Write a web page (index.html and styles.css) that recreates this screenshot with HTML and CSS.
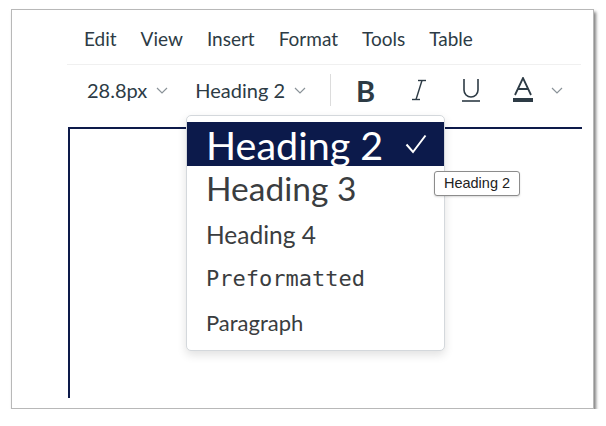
FILE: index.html
```html
<!DOCTYPE html>
<html lang="en">
<head>
  <meta charset="UTF-8">
  <title>Editor</title>
  <link rel="stylesheet" href="styles.css">
</head>
<body>
  <div class="frame">
    <nav class="menubar">
      <span>Edit</span>
      <span>View</span>
      <span>Insert</span>
      <span>Format</span>
      <span>Tools</span>
      <span>Table</span>
    </nav>
    <div class="rule"></div>

    <div class="toolbar">
      <div class="select size">
        <span>28.8px</span>
        <svg class="chev" width="12" height="7" viewBox="0 0 12 7"><polyline points="1,1 6,6 11,1" /></svg>
      </div>
      <div class="select block">
        <span>Heading 2</span>
        <svg class="chev" width="12" height="7" viewBox="0 0 12 7"><polyline points="1,1 6,6 11,1" /></svg>
      </div>
      <div class="divider"></div>
      <span class="btn bold">B</span>
      <svg class="btn ital" width="16" height="22" viewBox="0 0 16 22">
        <line x1="7" y1="1.5" x2="15" y2="1.5" />
        <line x1="11" y1="1.5" x2="5" y2="20.5" />
        <line x1="1" y1="20.5" x2="9" y2="20.5" />
      </svg>
      <svg class="btn under" width="20" height="24" viewBox="0 0 20 24">
        <path d="M3 1 V12 A7 7 0 0 0 17 12 V1" />
        <line x1="1" y1="23" x2="19" y2="23" />
      </svg>
      <svg class="btn color" width="22" height="26" viewBox="0 0 22 26">
        <path d="M3 18 L11 1 L19 18 M6 12 H16" />
        <rect class="bar" x="1" y="21" width="20" height="4" />
      </svg>
      <svg class="chev last" width="12" height="7" viewBox="0 0 12 7"><polyline points="1,1 6,6 11,1" /></svg>
    </div>

    <div class="editor"></div>

    <ul class="dropdown">
      <li class="item h2 active">
        <span>Heading 2</span>
        <svg class="check" width="22" height="20" viewBox="0 0 22 20"><polyline points="1.5,10.5 8,18 20.5,1.5" /></svg>
      </li>
      <li class="item h3">Heading 3</li>
      <li class="item h4">Heading 4</li>
      <li class="item pre">Preformatted</li>
      <li class="item para">Paragraph</li>
    </ul>

    <div class="tooltip">Heading 2</div>
  </div>
</body>
</html>
```

FILE: styles.css
```css
body {
  margin: 0;
  background: #fff;
  font-family: Lato, "Noto Sans", sans-serif;
  color: #2d3b45;
}
.frame {
  position: relative;
  box-sizing: border-box;
  margin: 9px 0 0 11px;
  width: 583px;
  height: 400px;
  background: #fff;
  border: 1px solid #b8b8b8;
  box-shadow: 2px 3px 3px rgba(0, 0, 0, 0.5);
}
.menubar {
  display: flex;
  gap: 24px;
  padding: 17px 0 0 72px;
  font-size: 19px;
  line-height: 24px;
}
.rule {
  margin: 13px 0 0 55px;
  width: 514px;
  border-top: 1px solid #f0f0f0;
}
.toolbar {
  display: flex;
  align-items: center;
  height: 42px;
  margin-top: 4px;
  padding-left: 75px;
  font-size: 20px;
}
.select {
  display: flex;
  align-items: center;
  gap: 9px;
}
.select.block {
  margin-left: 27px;
}
.chev {
  fill: none;
  stroke: #8a9298;
  stroke-width: 1.2;
}
.divider {
  width: 1px;
  height: 32px;
  background: #dcdcdc;
  margin-left: 24px;
}
.btn {
  color: #2d3b45;
  fill: none;
  stroke: #2d3b45;
}
.bold {
  margin-left: 25px;
  font-family: Lato, sans-serif;
  font-weight: bold;
  font-size: 29px;
  line-height: 1;
}
.ital {
  margin-left: 36px;
  stroke-width: 1.4;
}
.under {
  margin-left: 34px;
  stroke-width: 1.6;
}
.color {
  margin-left: 31px;
  stroke-width: 1.8;
}
.color .bar {
  fill: #2d3b45;
  stroke: none;
}
.chev.last {
  margin-left: 17px;
}
.editor {
  margin: 16px 0 0 56px;
  width: 512px;
  height: 269px;
  border-top: 2px solid #0d1a4a;
  border-left: 2px solid #0d1a4a;
}
.dropdown {
  position: absolute;
  left: 174px;
  top: 105px;
  box-sizing: border-box;
  width: 259px;
  height: 236px;
  margin: 0;
  padding: 6px 0 0;
  list-style: none;
  background: #fff;
  border: 1px solid #d4d8dc;
  border-radius: 5px;
  box-shadow: 0 4px 10px rgba(0, 0, 0, 0.12);
}
.item {
  display: flex;
  align-items: center;
  padding-left: 19px;
  color: #3a3d40;
}
.item.active {
  background: #0c1a4b;
  color: #fff;
}
.h2 {
  height: 44px;
  font-size: 39.5px;
}
.check {
  margin-left: auto;
  margin-right: 17px;
  fill: none;
  stroke: #fff;
  stroke-width: 2;
}
.h3 {
  height: 44px;
  font-size: 33.5px;
}
.h4 {
  height: 48px;
  font-size: 24.5px;
}
.pre {
  height: 40px;
  font-family: "DejaVu Sans Mono", "Liberation Mono", monospace;
  font-size: 22px;
}
.para {
  height: 48px;
  font-size: 22px;
}
.tooltip {
  position: absolute;
  left: 422px;
  top: 161px;
  box-sizing: border-box;
  width: 86px;
  height: 25px;
  border: 1px solid #8c8c8c;
  border-radius: 3px;
  background: #fff;
  box-shadow: 0 1px 2px rgba(0, 0, 0, 0.15);
  font-family: "Liberation Sans", Arial, sans-serif;
  font-size: 14.5px;
  line-height: 23px;
  text-align: center;
  color: #222;
}
```
